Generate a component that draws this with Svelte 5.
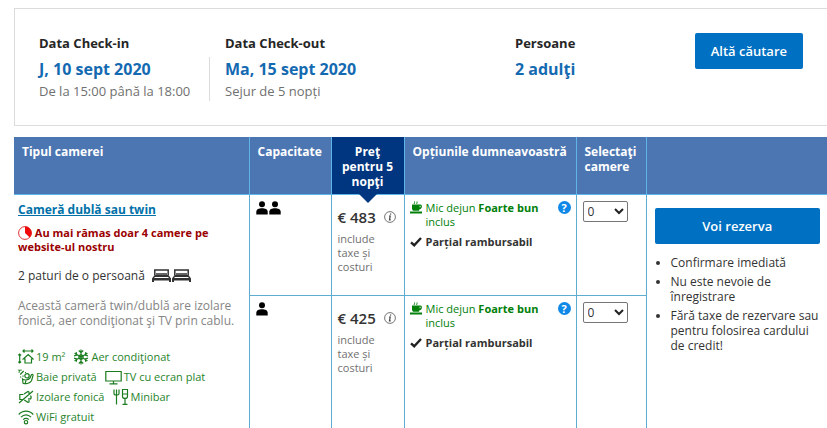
<script>
  const offers = [
    { guests: 2, price: '€ 483' },
    { guests: 1, price: '€ 425' }
  ];
  const perks = [
    'Confirmare imediată',
    'Nu este nevoie de înregistrare',
    'Fără taxe de rezervare sau pentru folosirea cardului de credit!'
  ];
  const facilities = [
    [{ icon: 'size', text: '19 m²' }, { icon: 'snow', text: 'Aer condiţionat' }],
    [{ icon: 'bath', text: 'Baie privată' }, { icon: 'tv', text: 'TV cu ecran plat' }],
    [{ icon: 'mute', text: 'Izolare fonică' }, { icon: 'bar', text: 'Minibar' }],
    [{ icon: 'wifi', text: 'WiFi gratuit' }]
  ];
</script>

{#snippet facilityIcon(name)}
  <svg class="fac" viewBox="0 0 16 16" aria-hidden="true">
    {#if name === 'size'}
      <path d="M5 2h10M6.500.500 5 2l1.500 1.500M13.500.500 15 2l-1.500 1.500M1.700 5v9M.3 6.400 1.700 5l1.400 1.400M.3 12.600 1.700 14l1.400-1.400M5.300 10 10.200 5.500 15.200 10H13.500v4H7v-4z" />
    {:else if name === 'snow'}
      <path d="M8 .5v15M1.500 4.200l13 7.600M1.500 11.800l13-7.600M5.800 1.500 8 3.600l2.200-2.100M5.800 14.500 8 12.400l2.200 2.100M1 6.900l2.900-.8-.8-3M15 6.900l-2.900-.8.8-3M1 9.100l2.900.8-.8 3M15 9.100l-2.900.8.8 3M8 5.500 5.900 6.800v2.500L8 10.500l2.100-1.200V6.800z" />
    {:else if name === 'bath'}
      <path d="M.5.700 2 2M3 .5v1.200M.5 3.200h1.200M2.200 5.500 5.700 2M2.600 7.500v1M5 6.500v1.200M7 3.500h1" />
      <circle cx="9" cy="6.800" r="2.200" />
      <path d="M4.500 10c2 1.600 5.500 1.300 7.500-1l1.400-3.300c.9-.9 1.900 0 1.600 1l-1.500 5c-1.800 3.100-6.500 3.500-8.500 2.500zM8 11.800l-.8 2.200" />
    {:else if name === 'mute'}
      <path d="M5.500 5.500H1.800v5h2.500M6 5l4-2.500 1 .5v2.500M11 9v4l-1.200.3L6.300 11M1 14 15 2M12.500 6.500c.8 1 .8 2.500-.3 3.800" />
    {:else if name === 'bar'}
      <path d="M1 .5v4.200c0 1.700 5 1.700 5 0V.5M3.500.5v15M9.500.5h5v6.700c0 3-5 3-5 0zM12 9.500v5.500M9.500 15.300h5M9.500 5h5" />
    {:else if name === 'wifi'}
      <path d="M.7 5.500c4-4.500 10.600-4.500 14.600 0M3 8.200c2.900-3.200 7.100-3.200 10 0M5.200 10.700c1.600-1.700 4-1.700 5.600 0" />
      <circle cx="8" cy="13.200" r="1.700" />
    {/if}
  </svg>
{/snippet}

{#snippet bed()}
  <svg class="bed" viewBox="0 0 19 13" aria-hidden="true">
    <path fill="none" stroke="#333" stroke-width="1.500" d="M2.800 6V1h13.400v5M4 5h11" />
    <path fill="#333" d="M2.500 6h14l2.500 3.500V13h-2v-1.500H2V13H0V9.500z" />
    <path stroke="#fff" d="M2.500 8.500h14" />
  </svg>
{/snippet}

<section class="search">
  <div class="field">
    <h2>Data Check-in</h2>
    <div class="detail split"><strong>J, 10 sept 2020</strong><span>De la 15:00 până la 18:00</span></div>
  </div>
  <div class="field">
    <h2>Data Check-out</h2>
    <div class="detail"><strong>Ma, 15 sept 2020</strong><span>Sejur de 5 nopți</span></div>
  </div>
  <div class="field">
    <h2>Persoane</h2>
    <div class="detail"><strong>2 adulţi</strong></div>
  </div>
  <button class="primary">Altă căutare</button>
</section>

<table>
  <colgroup>
    <col class="c-type" /><col class="c-cap" /><col class="c-price" /><col class="c-opt" /><col class="c-sel" /><col />
  </colgroup>
  <thead>
    <tr>
      <th scope="col">Tipul camerei</th>
      <th scope="col">Capacitate</th>
      <th scope="col" class="price-head">Preţ pentru 5 nopţi</th>
      <th scope="col">Opțiunile dumneavoastră</th>
      <th scope="col">Selectaţi camere</th>
      <td class="blank"></td>
    </tr>
  </thead>
  <tbody>
    {#each offers as offer, i}
      <tr class:first={i === 0}>
        {#if i === 0}
          <td rowspan="2" class="room">
            <a href="#room">Cameră dublă sau twin</a>
            <p class="scarce">
              <svg viewBox="0 0 14 14" aria-hidden="true"><circle cx="7" cy="7" r="6.400" fill="#fff" stroke="#e03030" /><path fill="#f00b0b" d="M7 7V.5a6.500 6.500 0 0 1 4.800 10.900z" /></svg>
              Au mai rămas doar 4 camere pe website-ul nostru
            </p>
            <p class="beds">2 paturi de o persoană <span>{@render bed()}{@render bed()}</span></p>
            <p class="about">Această cameră twin/dublă are izolare fonică, aer condiţionat şi TV prin cablu.</p>
            <ul class="facilities">
              {#each facilities as row}
                <li>
                  {#each row as f}
                    <span>
                      {#if f.icon === 'tv'}
                        <svg class="fac tv" viewBox="0 0 17 15" aria-hidden="true"><path d="M.8 1.500h15.400v9.500H.8zM8.500 11v2.500M4.500 13.800h8" /></svg>
                      {:else}
                        {@render facilityIcon(f.icon)}
                      {/if}
                      {f.text}
                    </span>
                  {/each}
                </li>
              {/each}
            </ul>
          </td>
        {/if}
        <td class="guests">
          {#each { length: offer.guests } as _}
            <svg viewBox="0 0 12 14" aria-hidden="true"><circle cx="6" cy="3.200" r="3" /><path d="M.3 13.500v-2.700C.3 8.300 3 7.300 6 7.300s5.700 1 5.700 3.500v2.700z" /></svg>
          {/each}
        </td>
        <td class="price">
          <div class="amount">
            {offer.price}
            <svg viewBox="0 0 12 12" aria-hidden="true"><circle cx="6" cy="6" r="5.400" fill="none" stroke="#666" stroke-width=".9" /><path fill="none" stroke="#444" stroke-width="1.200" d="M6.700 2.500 6.500 3.700M5 5h1.200l-.7 3.800h1.200" /></svg>
          </div>
          <small>include taxe și costuri</small>
        </td>
        <td class="options">
          <div class="option meal">
            <svg viewBox="0 0 12 13" aria-hidden="true"><path fill="#008009" d="M2 3.500h8.500c2 0 2 4.500-1 4.700L9 9.800H3L2 8zM0 10.500h12v2H0z" /><path fill="none" stroke="#008009" d="M4.500 3c-.8-1 .6-1.500 0-2.500M7 3c-.8-1 .6-1.500 0-2.500" /><path fill="#fff" d="M9.600 4.700h.9c.3.800 0 1.600-.8 1.800z" /></svg>
            <p>Mic dejun <b>Foarte bun</b> inclus</p>
            <button class="help" aria-label="Ajutor">?</button>
          </div>
          <div class="option">
            <svg viewBox="0 0 12 12" aria-hidden="true"><path fill="none" stroke="#222" stroke-width="2.400" d="M1 6.800 4.200 9.700 11 2.500" /></svg>
            <p><b>Parțial rambursabil</b></p>
          </div>
        </td>
        <td class="choose">
          <div class="picker">
            <select aria-label="Număr camere"><option>0</option><option>1</option><option>2</option></select>
            <svg viewBox="0 0 10 7" aria-hidden="true"><path fill="none" stroke="#222" stroke-width="2" d="m1 1 4 4 4-4" /></svg>
          </div>
        </td>
        {#if i === 0}
          <td rowspan="2" class="reserve">
            <button class="primary">Voi rezerva</button>
            <ul>
              {#each perks as perk}<li>{perk}</li>{/each}
            </ul>
          </td>
        {/if}
      </tr>
    {/each}
  </tbody>
</table>

<style>
  :global(body) {
    background: #fff;
    color: #333;
    font: 13px/15px 'Open Sans', 'Noto Sans', sans-serif;
  }
  h2, p, ul { margin: 0; padding: 0; }
  b, strong, th, h2 { font-weight: 700; }
  button { font-family: inherit; cursor: pointer; }
  svg { flex: none; }

  .search {
    display: grid;
    grid-template-columns: 186px 290px 1fr auto;
    align-items: start;
    margin: 8px 0 11px 14px;
    padding: 24px;
    border: 1px solid #dcdcdc;
    border-right: 0;
  }
  h2 { font-size: 13px; line-height: 20px; color: #262626; }
  .detail { display: flex; flex-direction: column; margin-top: 4px; line-height: 20px; }
  .detail strong { font-size: 16px; line-height: 24px; color: #146ab1; }
  .detail span { color: #707070; }
  .split { margin-right: 15px; border-right: 1px solid #dcdcdc; }
  .primary {
    height: 36px;
    padding: 0 16px;
    border: 0;
    border-radius: 2px;
    background: #0071c2;
    color: #fff;
    font-size: 13px;
    font-weight: 600;
  }

  table {
    width: calc(100% - 14px);
    margin-left: 14px;
    table-layout: fixed;
    border-collapse: collapse;
  }
  .c-type { width: 235px; }
  .c-cap { width: 82px; }
  .c-price { width: 73px; }
  .c-opt { width: 172px; }
  .c-sel { width: 70px; }
  td { padding: 0; vertical-align: top; border: 1px solid #5cadd0; }
  .room { border-left: 0; padding: 7px 4px 8px; }
  th, .blank {
    padding: 7px 8px 5px;
    border: 1px solid #5fb4e8;
    border-top: 0;
    background: #4c76b2;
    color: #fff;
    text-align: left;
    vertical-align: top;
    font-size: 12px;
    line-height: 15px;
  }
  th:first-child { border-left: 0; }
  .blank { border-right: 0; }
  .price-head { position: relative; background: #003580; text-align: center; }
  .price-head::after {
    content: '';
    position: absolute;
    top: 100%;
    left: 50%;
    margin-left: -9px;
    border: 9px solid transparent;
    border-top-color: #003580;
    border-bottom: 0;
  }
  .first { height: 101px; }

  .room a { font-size: 12px; font-weight: 700; line-height: 16px; color: #0071a8; text-decoration: underline; }
  .scarce { margin-top: 8px; color: #9b0000; font-size: 11px; font-weight: 700; line-height: 14px; }
  .scarce svg { width: 14px; height: 14px; vertical-align: -3px; }
  .beds { margin-top: 14px; font-size: 12px; line-height: 16px; }
  .beds span { display: inline-flex; gap: 1px; margin-left: 4px; vertical-align: -2px; }
  .bed { width: 19px; height: 13px; }
  .about { margin-top: 14px; color: #858585; font-size: 12px; }
  .facilities { margin-top: 19px; list-style: none; color: #28842c; font-size: 11px; line-height: 20px; }
  .facilities li, .facilities span { display: flex; align-items: center; }
  .facilities li { gap: 8px; height: 20px; white-space: nowrap; }
  .facilities span { gap: 2px; }
  .fac { width: 16px; height: 16px; fill: none; stroke: #1c7c20; stroke-width: 1.2; }
  .tv { width: 17px; height: 15px; }

  .guests { padding: 6px; font-size: 0; }
  .guests svg { width: 12px; height: 14px; margin-right: 1px; }
  .price { padding: 13px 8px 13px 6px; }
  .amount { display: flex; align-items: center; justify-content: space-between; font-size: 15px; font-weight: 600; line-height: 18px; white-space: nowrap; }
  .amount svg { width: 12px; height: 12px; }
  small { display: block; margin-top: 6px; padding-right: 12px; color: #707070; font-size: 11px; line-height: 14px; }
  .options { padding: 6px 5px; font-size: 11px; line-height: 14px; }
  .option { display: flex; gap: 4px; }
  .option p { flex: 1; }
  .option svg { width: 12px; height: 13px; }
  .option + .option { margin-top: 6px; }
  .meal { color: #008009; }
  .help {
    width: 13px;
    height: 13px;
    padding: 0;
    border: 0;
    border-radius: 50%;
    background: #1088e8;
    color: #fff;
    font-size: 11px;
    font-weight: 700;
    line-height: 13px;
  }
  .choose { padding: 6px; }
  .picker { display: grid; align-items: center; width: 45px; }
  .picker > * { grid-area: 1 / 1; }
  select {
    appearance: none;
    width: 100%;
    height: 21px;
    padding: 0 4px;
    border: 1px solid #767676;
    border-radius: 2px;
    background: #fff;
    color: #333;
    font: 12px 'Open Sans', sans-serif;
  }
  .picker svg { justify-self: end; width: 10px; height: 7px; margin-right: 4px; pointer-events: none; }
  .reserve { padding: 13px 7px 0 8px; border-right: 0; }
  .reserve .primary { width: 100%; }
  .reserve ul { margin-top: 11px; padding-left: 16px; font-size: 12px; line-height: 15px; }
  .reserve li { margin-bottom: 4px; }
</style>
